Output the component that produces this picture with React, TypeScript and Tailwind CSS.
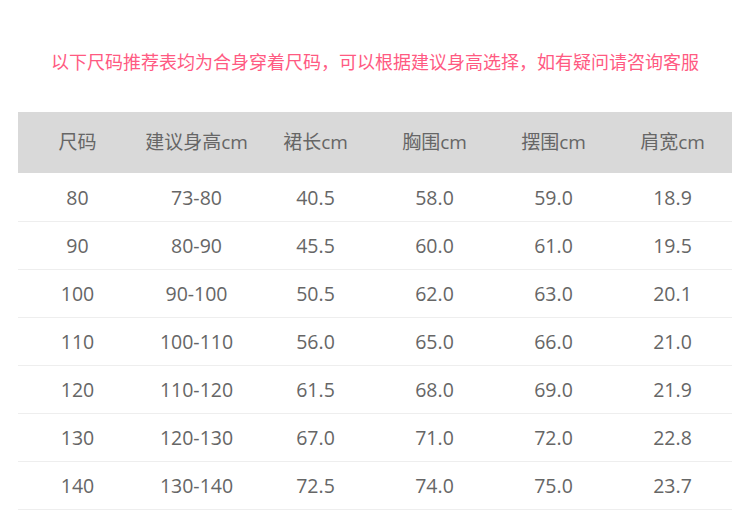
import React from "react";

const headers = ["尺码", "建议身高cm", "裙长cm", "胸围cm", "摆围cm", "肩宽cm"];
const rows = [
  ["80", "73-80", "40.5", "58.0", "59.0", "18.9"],
  ["90", "80-90", "45.5", "60.0", "61.0", "19.5"],
  ["100", "90-100", "50.5", "62.0", "63.0", "20.1"],
  ["110", "100-110", "56.0", "65.0", "66.0", "21.0"],
  ["120", "110-120", "61.5", "68.0", "69.0", "21.9"],
  ["130", "120-130", "67.0", "71.0", "72.0", "22.8"],
  ["140", "130-140", "72.5", "74.0", "75.0", "23.7"],
];

export default function App() {
  return (
    <div
      className="w-[750px] h-[510px] bg-white overflow-hidden"
      style={{ fontFamily: '"Open Sans", "Noto Sans CJK SC", sans-serif' }}
    >
      <div className="pt-[49px] h-[112px]">
        <p className="text-center text-[18px] leading-[26px] text-[#ff5a82]">
          以下尺码推荐表均为合身穿着尺码，可以根据建议身高选择，如有疑问请咨询客服
        </p>
      </div>
      <div className="mx-[18px] w-[714px]">
        <div className="grid grid-cols-6 h-[61px] bg-[#d9d9d9] items-center text-[19px] text-[#666]">
          {headers.map((h) => (
            <div key={h} className="text-center">
              {h}
            </div>
          ))}
        </div>
        <div className="pt-[1px]">
          {rows.map((r) => (
            <div
              key={r[0]}
              className="grid grid-cols-6 h-[48px] border-b border-[#eeeeee] items-center text-[19.5px] text-[#666]"
            >
              {r.map((c, i) => (
                <div key={i} className="text-center">
                  {c}
                </div>
              ))}
            </div>
          ))}
        </div>
      </div>
    </div>
  );
}
